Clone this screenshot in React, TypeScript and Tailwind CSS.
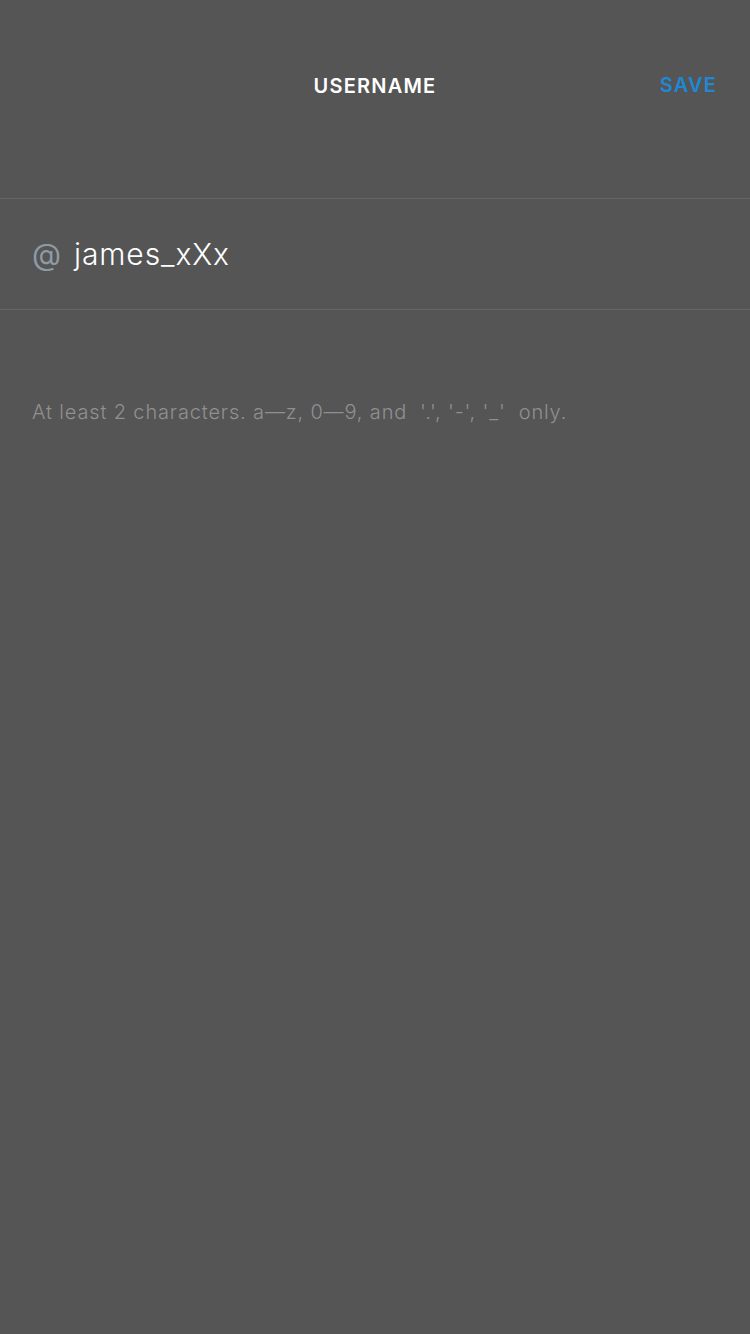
const App = () => {
  return (
    <div
      className="min-h-[1334px] w-[750px] bg-[#555555]"
      style={{ fontFamily: "Inter, 'Noto Sans', sans-serif" }}
    >
      <header className="h-[199px] border-b border-[#666666]">
        <div className="relative flex h-[172px] items-center justify-center">
          <span className="text-[20px] font-semibold tracking-[1.2px] text-white">USERNAME</span>
          <button className="absolute right-[33px] top-[70px] text-[20px] font-semibold tracking-[1.2px] text-[#1e88d4]">
            SAVE
          </button>
        </div>
      </header>

      <div className="flex h-[111px] items-center gap-[13px] border-b border-[#666666] px-[32px]">
        <span className="text-[30px] font-normal text-[#8e9ba5]">@</span>
        <span className="text-[30px] font-light tracking-[0.9px] text-white">james_xXx</span>
      </div>

      <p className="px-[32px] pt-[87px] text-[20px] font-light tracking-[0.85px] text-[#909090]">
        At least 2 characters. a—z, 0—9, and &nbsp;'.', '-', '_' &nbsp;only.
      </p>
    </div>
  );
};

export default App;
